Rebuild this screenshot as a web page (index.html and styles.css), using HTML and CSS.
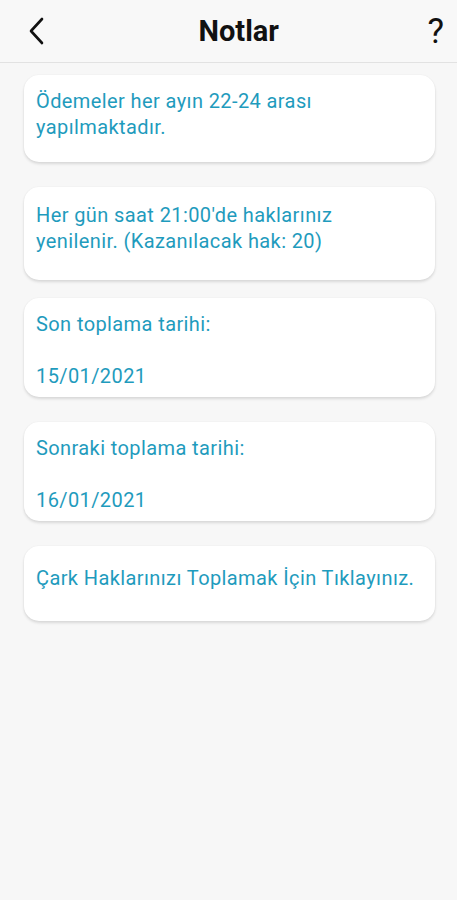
FILE: index.html
```html
<!DOCTYPE html>
<html lang="tr">
<head>
    <meta charset="UTF-8">
    <meta name="viewport" content="width=device-width, initial-scale=1.0">
    <title>Notlar</title>
    <link rel="stylesheet" href="styles.css">
</head>
<body>
    <header class="topbar">
        <a href="#" class="icon-btn back">
            <svg width="16" height="28" viewBox="0 0 16 28">
                <path d="M14 2 L3 14 L14 26" fill="none" stroke="#111" stroke-width="2.6" stroke-linecap="round" stroke-linejoin="round"/>
            </svg>
        </a>
        <h1>Notlar</h1>
        <a href="#" class="icon-btn help">?</a>
    </header>

    <main class="notes">
        <div class="note note-a">Ödemeler her ayın 22-24 arası<br>yapılmaktadır.</div>
        <div class="note note-b">Her gün saat 21:00'de haklarınız<br>yenilenir. (Kazanılacak hak: 20)</div>
        <div class="note note-c tight">Son toplama tarihi:<br><br>15/01/2021</div>
        <div class="note note-c">Sonraki toplama tarihi:<br><br>16/01/2021</div>
        <a href="#" class="note note-d">Çark Haklarınızı Toplamak İçin Tıklayınız.</a>
    </main>
</body>
</html>
```

FILE: styles.css
```css
* {
    margin: 0;
    padding: 0;
    box-sizing: border-box;
}

body {
    font-family: Roboto, 'Noto Sans', sans-serif;
    background-color: #f7f7f7;
    color: #1f9bbd;
    width: 457px;
    height: 900px;
}

.topbar {
    display: flex;
    justify-content: space-between;
    align-items: center;
    height: 63px;
    padding: 0 13px 0 28px;
    border-bottom: 1px solid #e2e2e2;
    background-color: #f8f8f8;
}

.topbar h1 {
    font-size: 29px;
    font-weight: bold;
    color: #111;
    margin-left: 6px;
}

.icon-btn {
    color: #111;
    text-decoration: none;
    display: flex;
    align-items: center;
}

.help {
    font-size: 35px;
    font-weight: normal;
    line-height: 1;
}

.notes {
    display: flex;
    flex-direction: column;
    gap: 25px;
    padding: 12px 22px 0 24px;
}

.note {
    display: block;
    background-color: #fff;
    border-radius: 15px;
    box-shadow: 0 2px 3px rgba(0, 0, 0, 0.12), 0 0 2px rgba(0, 0, 0, 0.05);
    padding: 13px 12px 0;
    font-size: 20px;
    line-height: 26px;
    letter-spacing: 0.4px;
    color: #1f9bbd;
    text-decoration: none;
}

.note-a {
    height: 87px;
}

.note-b {
    height: 93px;
    padding-top: 15px;
}

.note-c {
    height: 99px;
}

.tight {
    margin-top: -7px;
}

.note-d {
    height: 75px;
    padding-top: 19px;
}
```
